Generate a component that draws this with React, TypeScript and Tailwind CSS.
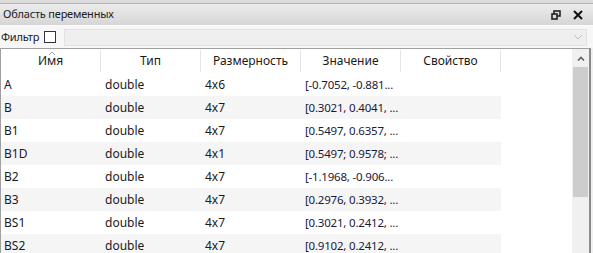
import React from "react";

const rows = [
  { name: "A", type: "double", size: "4x6", value: "[-0.7052, -0.881..." },
  { name: "B", type: "double", size: "4x7", value: "[0.3021, 0.4041, ..." },
  { name: "B1", type: "double", size: "4x7", value: "[0.5497, 0.6357, ..." },
  { name: "B1D", type: "double", size: "4x1", value: "[0.5497; 0.9578; ..." },
  { name: "B2", type: "double", size: "4x7", value: "[-1.1968, -0.906..." },
  { name: "B3", type: "double", size: "4x7", value: "[0.2976, 0.3932, ..." },
  { name: "BS1", type: "double", size: "4x7", value: "[0.3021, 0.2412, ..." },
  { name: "BS2", type: "double", size: "4x7", value: "[0.9102, 0.2412, ..." },
];

const headers = ["Имя", "Тип", "Размерность", "Значение", "Свойство"];

export default function App() {
  return (
    <div
      className="w-[593px] h-[253px] overflow-hidden flex flex-col bg-[#f0f0f0] text-[12px] text-[#1a1a1a] whitespace-nowrap"
      style={{ fontFamily: '"Noto Sans", "DejaVu Sans", sans-serif' }}
    >
      {/* top strip */}
      <div className="h-[4px] bg-[#dcdcdc] border-b border-[#b4b4b4]" />

      {/* title bar */}
      <div className="h-[22px] flex items-center justify-between pl-[3px] pr-[10px] bg-gradient-to-b from-[#ececec] to-[#d6d6d6] border-b border-[#fafafa]">
        <span className="text-[#222] text-[11px] tracking-[-0.2px]">Область переменных</span>
        <div className="flex items-center gap-[12px]">
          <svg width="10" height="10" viewBox="0 0 10 10">
            <rect x="3" y="1" width="6" height="5" fill="none" stroke="#222" strokeWidth="1.6" />
            <rect x="1" y="4" width="5" height="5" fill="#ddd" stroke="#222" strokeWidth="1.6" />
          </svg>
          <svg width="10" height="10" viewBox="0 0 10 10">
            <path d="M1 1 L9 9 M9 1 L1 9" stroke="#111" strokeWidth="2" />
          </svg>
        </div>
      </div>

      {/* filter row */}
      <div className="h-[22px] flex items-center bg-[#f7f7f7] pl-[1px] pr-[6px]">
        <span className="text-[11px] tracking-[-0.2px]">Фильтр</span>
        <div className="ml-[5px] w-[12px] h-[12px] border border-[#333] bg-white" />
        <div className="ml-[8px] flex-1 h-[17px] bg-[#efefef] border border-[#e2e2e2] flex items-center justify-end pr-[3px]">
          <svg width="10" height="6" viewBox="0 0 10 6">
            <path d="M1 1 L5 5 L9 1" fill="none" stroke="#bdbdbd" strokeWidth="1" />
          </svg>
        </div>
      </div>

      {/* table */}
      <div className="flex-1 flex bg-white border-t border-l border-[#a0a0a0] mr-[2px] border-r-2 border-r-[#8a8a8a] overflow-hidden">
        <div className="flex-1 flex flex-col">
          <div className="h-[24px] flex shrink-0">
            {headers.map((h, i) => (
              <div
                key={h}
                className="relative w-[100px] flex items-center justify-center border-r border-[#e5e5e5] my-[1px]"
              >
                {i === 0 && (
                  <svg className="absolute top-[1px] left-[47px]" width="8" height="5" viewBox="0 0 8 5">
                    <path d="M1 4 L4 1 L7 4" fill="none" stroke="#a0a0a0" strokeWidth="1" />
                  </svg>
                )}
                {h}
              </div>
            ))}
          </div>
          {rows.map((r, idx) => (
            <div
              key={r.name}
              className={`h-[23px] w-[500px] shrink-0 flex items-center ${idx % 2 ? "bg-[#f5f5f5]" : "bg-white"}`}
            >
              <div className="w-[100px] pl-[3px]">{r.name}</div>
              <div className="w-[100px] pl-[4px]">{r.type}</div>
              <div className="w-[100px] pl-[4px]">{r.size}</div>
              <div className="w-[100px] pl-[4px] text-[#1a1a3a] text-[11.5px] tracking-[-0.2px] overflow-hidden">
                {r.value}
              </div>
              <div className="w-[100px]" />
            </div>
          ))}
        </div>

        {/* scrollbar */}
        <div className="w-[17px] flex flex-col bg-[#f0f0f0]">
          <div className="h-[18px] flex items-center justify-center">
            <svg width="8" height="5" viewBox="0 0 8 5">
              <path d="M1 4.5 L4 1.5 L7 4.5" fill="none" stroke="#606060" strokeWidth="1.6" />
            </svg>
          </div>
          <div className="mx-[1px] h-[130px] bg-[#cdcdcd]" />
        </div>
      </div>
    </div>
  );
}
